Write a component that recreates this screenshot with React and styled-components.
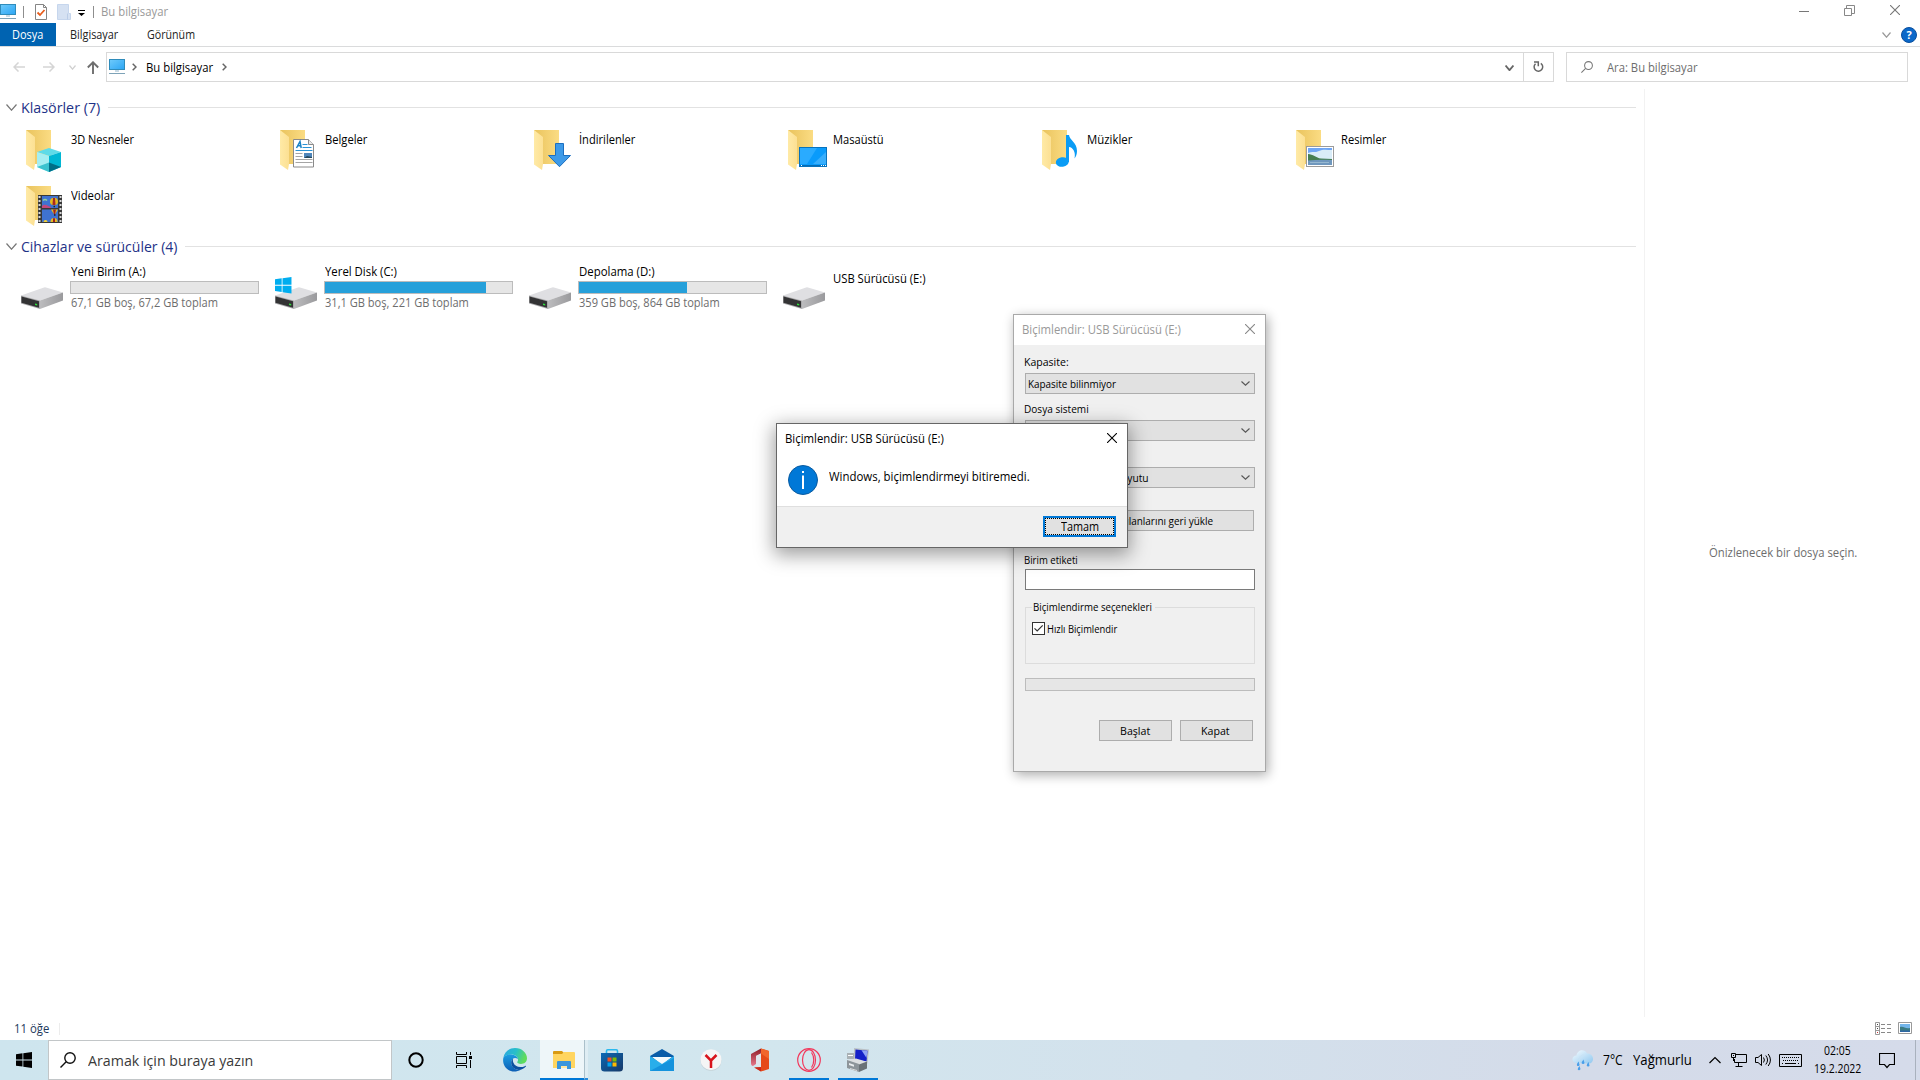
import React, { useLayoutEffect, useRef } from "react";
import styled, { createGlobalStyle, css } from "styled-components";

const Global = createGlobalStyle`
  * { box-sizing: border-box; }
  html, body { margin: 0; padding: 0; overflow: hidden; }
  body { font-family: "Open Sans", "Noto Sans", sans-serif; font-size: 12px; color: #000; }
  svg { display: block; flex: none; }
`;

/* ---------- text ---------- */
const Label = styled.span`
  display: block;
  flex: none;
  width: ${(p) => p.$w}px;
  margin-left: ${(p) => p.$ml || 0}px;
  font-size: ${(p) => p.$size || 12}px;
  line-height: ${(p) => p.$lh || 18}px;
  color: ${(p) => p.$color || "#000"};
  white-space: nowrap;
`;
const Glyphs = styled.span`
  display: inline-block;
  transform-origin: 0 50%;
`;

/* Condenses a run of text to the column width it is given. */
function Text({ w, ml, size, lh, color, children }) {
  const ref = useRef(null);
  useLayoutEffect(() => {
    const el = ref.current;
    el.style.transform = `scaleX(${w / el.offsetWidth})`;
  }, [w, children]);
  return (
    <Label $w={w} $ml={ml} $size={size} $lh={lh} $color={color}>
      <Glyphs ref={ref}>{children}</Glyphs>
    </Label>
  );
}

/* ---------- page frame ---------- */
const Desktop = styled.div`
  position: relative;
  width: 1920px;
  height: 1080px;
  background: #fff;
  display: flex;
  flex-direction: column;
`;
const Row = styled.div`
  display: flex;
  align-items: center;
`;
const TitleBar = styled(Row)`
  height: 23px;
  flex: none;
`;
const Divider = styled.i`
  width: 1px;
  height: ${(p) => p.$h || 12}px;
  margin-left: ${(p) => p.$ml}px;
  background: ${(p) => p.$color || "#8e8e8e"};
`;
const Slot = styled.div`
  margin-left: ${(p) => p.$ml || 0}px;
  padding-top: ${(p) => p.$pt || 0}px;
  flex: none;
`;
const Controls = styled.div`
  margin-left: auto;
  display: flex;
  gap: 35px;
  padding: 0 20px 3px 0;
`;
const Ribbon = styled(Row)`
  height: 24px;
  flex: none;
  border-bottom: 1px solid #dadbdc;
`;
const FileTab = styled(Row)`
  width: 56px;
  height: 23px;
  padding-top: 1px;
  background: #0063b1;
`;
const Tabs = styled(Row)`
  padding-top: 1px;
`;
const RibbonEnd = styled(Row)`
  margin-left: auto;
  gap: 10px;
  padding-right: 3px;
`;
const NavBar = styled(Row)`
  height: 40px;
  padding-right: 12px;
  flex: none;
`;
const AddressBox = styled(Row)`
  width: 1448px;
  height: 30px;
  margin-left: 7px;
  border: 1px solid #d9d9d9;
`;
const RefreshCell = styled(Row)`
  justify-content: center;
  width: 30px;
  height: 28px;
  border-left: 1px solid #d9d9d9;
`;
const SearchBox = styled(Row)`
  width: 342px;
  height: 30px;
  margin-left: 12px;
  border: 1px solid #d9d9d9;
`;
const Body = styled.div`
  display: flex;
  height: 930px;
  flex: none;
`;
const Files = styled.div`
  width: 1644px;
  padding-top: 8px;
`;
const Preview = styled.div`
  flex: 1;
  height: 928px;
  margin-top: 2px;
  border-left: 1px solid #f2f2f2;
  display: flex;
  align-items: center;
  justify-content: center;
`;
const GroupHead = styled(Row)`
  height: 24px;
  padding: 0 8px 0 6px;
`;
const Rule = styled.i`
  flex: 1;
  height: 1px;
  margin-left: 8px;
  background: #e2e2e2;
`;
const Tiles = styled.div`
  display: grid;
  grid-template-columns: repeat(6, 254px);
  grid-auto-rows: 56px;
  padding: ${(p) => p.$pt || 0}px 0 0 21px;
`;
const Tile = styled.div`
  display: flex;
  gap: 2px;
`;
const TileText = styled.div`
  padding-top: ${(p) => p.$pt}px;
`;
const Gauge = styled.div`
  width: 189px;
  height: 13px;
  margin-left: -1px;
  border: 1px solid #bcbcbc;
  background: #e6e6e6;
`;
const GaugeFill = styled.div`
  height: 11px;
  background: #26a0da;
`;
const StatusBar = styled(Row)`
  height: 23px;
  padding: 0 8px 0 14px;
  flex: none;
`;
const ViewModes = styled.div`
  margin-left: auto;
  display: flex;
  gap: 7px;
`;

/* ---------- windows ---------- */
const Window = styled.div`
  position: absolute;
  left: ${(p) => p.$x}px;
  top: ${(p) => p.$y}px;
  width: ${(p) => p.$w}px;
  height: ${(p) => p.$h}px;
  border: 1px solid ${(p) => (p.$active ? "#666" : "#a9a9a9")};
  background: #f0f0f0;
  box-shadow: ${(p) =>
    p.$active ? "0 5px 18px 2px rgba(0,0,0,.38)" : "2px 3px 11px 0 rgba(0,0,0,.33)"};
`;
const WinTitle = styled(Row)`
  height: ${(p) => p.$h}px;
  padding: 0 10px 0 8px;
  justify-content: space-between;
  background: #fff;
`;
const CloseBox = styled.div`
  padding-bottom: 2px;
`;
const Form = styled.div`
  padding: 8px 10px 0 11px;
`;
const control = css`
  display: flex;
  align-items: center;
  height: 21px;
  border: 1px solid #adadad;
  background: #e1e1e1;
`;
const Select = styled.div`
  ${control}
  margin-bottom: ${(p) => p.$mb}px;
  padding: 0 4px 0 2px;
  justify-content: space-between;
`;
const FieldLabel = styled.div`
  height: ${(p) => p.$h}px;
  margin-top: ${(p) => p.$mt || 0}px;
  margin-left: -1px;
  display: flex;
  align-items: flex-start;
`;
const Button = styled.div`
  ${control}
  width: ${(p) => p.$w}px;
  padding-right: ${(p) => p.$pr || 0}px;
  padding-left: ${(p) => p.$pl || 0}px;
  justify-content: center;
`;
const Input = styled.div`
  height: 21px;
  border: 1px solid #7a7a7a;
  background: #fff;
`;
const Fieldset = styled.fieldset`
  height: 66px;
  margin: 8px 0 0;
  padding: 3px 0 0 6px;
  border: 1px solid #dcdcdc;
  min-width: 0;
`;
const Legend = styled.legend`
  padding: 0 3px 0 1px;
  height: 18px;
`;
const CheckRow = styled(Row)`
  height: 19px;
`;
const Check = styled.div`
  width: 13px;
  height: 13px;
  margin-right: 2px;
  border: 1px solid #333;
  background: #fff;
`;
const Progress = styled.div`
  height: 13px;
  margin-top: 14px;
  border: 1px solid #bcbcbc;
  background: #e6e6e6;
`;
const Actions = styled(Row)`
  justify-content: flex-end;
  gap: 8px;
  padding-right: 2px;
  margin-top: 29px;
`;
const Message = styled.div`
  height: 53px;
  padding: 12px 0 0 11px;
  background: #fff;
  display: flex;
  gap: 11px;
`;
const MessageFoot = styled.div`
  height: 41px;
  padding: 9px 11px 0 0;
  border-top: 1px solid #dfdfdf;
  display: flex;
  justify-content: flex-end;
`;
const DefaultButton = styled.div`
  width: 73px;
  height: 21px;
  border: 2px solid #0078d7;
  background: #e1e1e1;
`;
const FocusRing = styled(Row)`
  height: 17px;
  border: 1px dotted #000;
  justify-content: center;
`;

/* ---------- taskbar ---------- */
const Taskbar = styled.div`
  display: flex;
  align-items: center;
  height: 40px;
  flex: none;
  background: linear-gradient(90deg, #cee5ee 0%, #d2e6ee 40%, #d3e1ec 62%, #d4dbe9 82%, #d5dbea 100%);
`;
const StartButton = styled(Row)`
  width: 48px;
  height: 40px;
  justify-content: center;
`;
const TaskSearch = styled(Row)`
  width: 344px;
  height: 40px;
  border: 1px solid #c2c6c8;
  background: #fff;
  padding-left: 11px;
`;
const TaskButton = styled.div`
  display: flex;
  align-items: center;
  justify-content: center;
  width: ${(p) => p.$w || 48}px;
  height: 40px;
  padding-left: ${(p) => p.$pl || 0}px;
  ${(p) => p.$active && "background: #eef6f9;"}
`;
const OpenMark = styled.div`
  display: flex;
  align-items: center;
  justify-content: center;
  width: ${(p) => p.$w}px;
  height: 40px;
  margin: 0 ${(p) => p.$m || 0}px;
  padding: 2px 0 0 ${(p) => p.$pl || 0}px;
  border-bottom: 2px solid #0078d7;
`;
const ActiveTask = styled(TaskButton)`
  padding: 2px 0 0 4px;
  background: #eef6f9;
  border-bottom: 2px solid #0078d7;
`;
const Stacked = styled.div`
  width: 4px;
  height: 40px;
  border-left: 1px solid #abc0ca;
  border-bottom: 2px solid #2a8bda;
  background: #dfedf3;
`;
const Tray = styled(Row)`
  margin-left: auto;
  height: 40px;
`;
const Clock = styled.div`
  width: 49px;
  margin-left: 11px;
  display: flex;
  flex-direction: column;
  align-items: center;
`;

/* ---------- drawings ---------- */
const PcIcon = () => (
  <svg width="16" height="16" viewBox="0 0 16 16">
    <defs>
      <linearGradient id="pc" x1="0" y1="0" x2="1" y2="1">
        <stop offset="0" stopColor="#6fcbfb" /><stop offset="1" stopColor="#2ba5f4" />
      </linearGradient>
    </defs>
    <rect x="0.5" y="0.5" width="15" height="10" fill="url(#pc)" stroke="#2f8cbb" />
    <path d="M6 11h4v2H6z" fill="#c9dbe6" />
    <path d="M0 14h16v1H0z" fill="#7ea3b8" />
  </svg>
);
const Chev = ({ w = 8, h = 5, c = "#666", s = 1.2 }) => (
  <svg width={w} height={h} viewBox={`0 0 ${w} ${h}`}>
    <path d={`M.5.5 ${w / 2} ${h - 0.8} ${w - 0.5}.5`} fill="none" stroke={c} strokeWidth={s} />
  </svg>
);
const Crumb = () => (
  <svg width="5" height="8" viewBox="0 0 5 8">
    <path d="M.7.7 4 4 .7 7.3" fill="none" stroke="#666" strokeWidth="1.5" />
  </svg>
);
const Close = ({ c = "#000" }) => (
  <svg width="10" height="10" viewBox="0 0 10 10">
    <path d="M0 0 10 10M10 0 0 10" stroke={c} strokeWidth="1.1" />
  </svg>
);
const Arrow = ({ left }) => (
  <svg width="12" height="10" viewBox="0 0 12 10">
    <path d={left ? "M12 5H1M5.5.5 1 5l4.5 4.5" : "M0 5h11M6.5.5 11 5 6.5 9.5"} fill="none" stroke="#d5d5d5" strokeWidth="1.5" />
  </svg>
);
const Lens = ({ n = 12, c = "#777" }) => (
  <svg width={n} height={n} viewBox="0 0 16 16">
    <circle cx="10" cy="6" r="5.2" fill="none" stroke={c} strokeWidth="1.4" />
    <path d="M6.2 9.8.5 15.5" stroke={c} strokeWidth="1.4" />
  </svg>
);
const WinLogo = ({ w, h, c }) => (
  <svg width={w} height={h} viewBox="0 0 16 16" preserveAspectRatio="none">
    <path fill={c} d="M0 2.3 6.5 1.3v6.2H0zM7.3 1.2 16 0v7.5H7.3zM0 8.4h6.5v6.2L0 13.7zM7.3 8.4H16V16l-8.7-1.2z" />
  </svg>
);

const overlays = {
  cube: (
    <g>
      <path d="M16 26l12-4 12 4-12 4z" fill="#5fdbe8" />
      <path d="M16 26l12 4v16l-12-5z" fill="#a5eef2" />
      <path d="M28 30l12-4v15l-12 5z" fill="#00b7d4" />
      <path d="M16 41l12-4.500v9.500z" fill="#3bc3cf" />
      <path d="M40 41l-12-4.500v9.500z" fill="#006f88" />
    </g>
  ),
  doc: (
    <g>
      <path d="M18.500 13.500h15l5 5v22.500h-20z" fill="#fff" stroke="#8a8a8a" />
      <path d="M33.500 13.500v5h5" fill="#e8e8e8" stroke="#8a8a8a" />
      <path d="M21.500 22 25 15.500l1.200 6.500M22.700 19.700h3" fill="none" stroke="#1a82c4" strokeWidth="1.500" />
      <path d="M27.500 18.500h5M27.500 21.500h9M20.500 24.500h17" stroke="#2a93d5" />
      <path d="M20.500 27.500h7M20.500 30.500h7M20.500 33.500h17M20.500 36.500h17" stroke="#a5a5a5" />
      <rect x="29" y="27" width="8" height="5" fill="#4f86bb" />
      <path d="M29 32l3-2 5 1v1z" fill="#24475c" />
    </g>
  ),
  down: <path d="M26.500 17.500h8v12h7L30.500 40.700 19.500 29.500h7z" fill="#3d9ae8" stroke="#1c6fc0" />,
  desktop: (
    <g>
      <rect x="16.500" y="21.500" width="27" height="19" fill="#0a9bfb" stroke="#0873bd" />
      <path d="M17 22h17L24 38h-7z" fill="#2aabff" />
      <path d="M43 26v12H30z" fill="#38aefc" />
      <path d="M17 39.500h26" stroke="#066cb3" />
      <path d="M18 39.500h1M38 39.500h1M40 39.500h1M42 39.500h1" stroke="#fff" />
    </g>
  ),
  note: (
    <g fill="#0a9cf5">
      <ellipse cx="25.300" cy="36" rx="6.500" ry="4.800" transform="rotate(-8 25.300 36)" />
      <path d="M29 9h3c.5 5 8 7.500 8 16 0 3-1 5.500-2.500 7.500C39 26 36 21.500 32 21v15h-3z" />
    </g>
  ),
  picture: (
    <g>
      <rect x="15.500" y="20.500" width="27" height="20" fill="#fff" stroke="#9b9b9b" />
      <rect x="17" y="22" width="24" height="17" fill="#6fa6f5" />
      <path d="M17 27c4-2 7 0 11-2s8-1 13-1v9H17z" fill="#d9ecf8" />
      <path d="M17 28c5 0 8 4 13 4.500l11 .5v2H17z" fill="#457e51" />
      <path d="M17 34.500c8-1 16-1 24-.5v5H17z" fill="#6f97bd" />
      <path d="M19 36.500h19" stroke="#a9c5d8" strokeWidth=".7" />
    </g>
  ),
  film: (
    <g>
      <rect x="17" y="13" width="24" height="28" fill="#383838" />
      <path d="M18.500 14v27M39.500 14v27" stroke="#d7d7d7" strokeWidth="2" strokeDasharray="2 2" />
      <path d="M21 14h16v12H21zM21 27.500h16V40H21z" fill="#3f72d0" />
      <path d="M21 24c3-3 6 0 9 1v1h-9z" fill="#c0487c" />
      <path d="M22 18.500q2-2 4 0" stroke="#8fd0a0" fill="none" strokeWidth="1.500" />
      <ellipse cx="33" cy="19.500" rx="4" ry="3.800" fill="#e5ba20" />
      <path d="M32 16h2l.5 7h-3z" fill="#a92822" />
      <path d="M30 27.500h7l-2.500 4h-2z" fill="#e4bb26" />
      <path d="M32 27.500h3l-1 5h-1z" fill="#a3221f" />
      <path d="M29.500 40q0-4 3.500-4t3.500 4z" fill="#e4bb26" />
      <path d="M32 36.200h2V40h-2z" fill="#a3221f" />
      <path d="M22.500 40q0-2 2-2t2 2z" fill="#f0cf38" />
      <path d="M32.500 24.500h1.500M33 33h1.500" stroke="#222" strokeWidth="1.500" />
    </g>
  ),
};
const FolderIcon = ({ kind }) => (
  <svg width="48" height="56" viewBox="0 0 48 56">
    <defs>
      <linearGradient id="fb"><stop offset="0" stopColor="#e9c35d" /><stop offset="1" stopColor="#fbdc83" /></linearGradient>
      <linearGradient id="ff"><stop offset="0" stopColor="#ffeaa6" /><stop offset="1" stopColor="#fce093" /></linearGradient>
    </defs>
    <g transform="translate(0 4)">
      <path d="M5 4h25v34H13z" fill="url(#fb)" />
      <path d="M5 4l9 7v27l-1 6-8-5.500z" fill="url(#ff)" />
      {overlays[kind]}
    </g>
  </svg>
);
const DriveIcon = ({ system }) => (
  <svg width="48" height="56" viewBox="0 0 48 56">
    <defs>
      <linearGradient id="ds"><stop offset="0" stopColor="#bcbcbe" /><stop offset="1" stopColor="#9a9a9d" /></linearGradient>
    </defs>
    <path d="M0 36.500 23 28.500q1-.4 2 0L42 33.500 19 41.500z" fill="#dfdfe2" />
    <path d="M19 41.500 42 33.500v8L19 50z" fill="url(#ds)" />
    <path d="M0 36.500l19 5V50L0 44.500z" fill="#a9a9ab" />
    <path d="M.5 37.500l17.500 4.700v6.600L.5 43.800z" fill="#333334" />
    <path d="M14 44.500l2.200.6v1.500l-2.200-.6z" fill="#2fe03c" />
    {system && (
      <path transform="translate(0 18) scale(1.03)" fill="#00adef" d="M0 2.300 6.500 1.300v6.200H0zM7.300 1.200 16 0v7.500H7.300zM0 8.400h6.500v6.200L0 13.700zM7.300 8.400H16V16l-8.700-1.200z" />
    )}
  </svg>
);

const Edge = () => (
  <svg width="24" height="24" viewBox="0 0 24 24">
    <defs>
      <linearGradient id="e1" x1="0" y1="0" x2="1" y2=".3"><stop offset="0" stopColor="#2aa6e4" /><stop offset=".55" stopColor="#28bfc9" /><stop offset="1" stopColor="#5fdc5c" /></linearGradient>
      <linearGradient id="e2" x1="0" y1="0" x2="0" y2="1"><stop offset="0" stopColor="#1b9de2" /><stop offset="1" stopColor="#0d5eb5" /></linearGradient>
    </defs>
    <path d="M.3 10C1.300 4 6 0 12 0c7 0 12 5 12 10.300 0 3.700-2.800 5.700-6 5.700-2.700 0-4-1-3.800-1.800.2-.6.800-1 .8-2.500C15 9 12 6.500 8.500 6.500 4.500 6.500 1.500 8.500.3 10z" fill="url(#e1)" />
    <path d="M.3 10c1.500-2.500 5-3.800 8.200-3.500 3.300.3 6 2 6.300 4.500-3.300-2.500-7 0-6.600 4 .4 4.500 5 8 9.800 6.500C9 27-1.500 20.500.3 10z" fill="url(#e2)" />
    <path d="M10.200 10.400c-3.200 2-2.500 8 1.500 10.400 3.600 2 7.800 1.400 11.200-2.300.4-.5 0-1-.6-.6-5.500 2.600-10.500.6-12-3.400-.5-1.500-.6-2.700-.1-4.100z" fill="#0c4fa0" />
  </svg>
);
const Explorer = () => (
  <svg width="22" height="18" viewBox="0 0 22 18">
    <path d="M0 1q0-1 1-1h8l2 2h-1v3H0z" fill="#d99a12" />
    <path d="M0 3h9l2-2h10q1 0 1 1v15H0z" fill="#ffd560" />
    <path d="M4 18v-7q0-1 1-1h12q1 0 1 1v7h-4v-3H8v3z" fill="#3a96dd" />
    <path d="M8 15h6v2H8z" fill="#ffe8a4" />
  </svg>
);
const Store = () => (
  <svg width="24" height="24" viewBox="0 0 24 24">
    <defs><linearGradient id="st" x1="0" y1="0" x2="1" y2="1"><stop offset="0" stopColor="#0c69b5" /><stop offset="1" stopColor="#173867" /></linearGradient></defs>
    <path d="M6.500 6V3q0-1.200 1.200-1.200h8.600q1.200 0 1.200 1.200v3" fill="none" stroke="#29b8ee" strokeWidth="1.600" />
    <path d="M1 5h22v15q0 3.500-3.500 3.500h-15Q1 23.500 1 20z" fill="url(#st)" />
    <path d="M7.500 9.500h4v4h-4z" fill="#f25022" /><path d="M12.500 9.500h4v4h-4z" fill="#7fba00" />
    <path d="M7.500 14.500h4v4h-4z" fill="#00a4ef" /><path d="M12.500 14.500h4v4h-4z" fill="#ffb900" />
  </svg>
);
const Mail = () => (
  <svg width="24" height="24" viewBox="0 0 24 24">
    <path d="M0 8 12 1l12 7v5H0z" fill="#0a5ca8" />
    <path d="M2 9h20l-10 8z" fill="#f5fafc" />
    <path d="M0 8l12 8 12-8v15H0z" fill="#29aeea" />
    <path d="M0 23 24 10v13z" fill="#0f89d8" opacity=".75" />
  </svg>
);
const Yandex = () => (
  <svg width="22" height="22" viewBox="0 0 22 22">
    <circle cx="11" cy="11.500" r="10.500" fill="#c4d2d8" /><circle cx="11" cy="10.700" r="10.500" fill="#f5f5f5" />
    <path d="M5.500 6 11 11.500v7.500M16.500 6 11 11.500" fill="none" stroke="#d8131b" strokeWidth="2.500" />
  </svg>
);
const Office = () => (
  <svg width="18" height="24" viewBox="0 0 18 24">
    <defs><linearGradient id="of" x1="0" y1="0" x2="0" y2="1"><stop offset="0" stopColor="#8e1b25" /><stop offset="1" stopColor="#e6798c" /></linearGradient></defs>
    <path d="M0 6 10 .5v5L5 8v8l-3 2q-2 0-2-3z" fill="url(#of)" />
    <path d="M10 .5 18 3v18l-8 2.500-6-4h6z" fill="#e64a19" />
    <path d="M10 .5 18 3v8l-8-5.500z" fill="#f1662c" />
    <path d="M3 19.500 10 19v4.500z" fill="#c92a1d" />
    <path d="M5 8l5-2.500V19l-5-1z" fill="#dfe6ec" />
  </svg>
);
const Opera = () => (
  <svg width="24" height="24" viewBox="0 0 24 24">
    <g fill="none" stroke="#f2385c" strokeWidth="1.200">
      <circle cx="12" cy="12" r="11.300" />
      <ellipse cx="12" cy="12" rx="6.500" ry="10.300" />
      <path d="M14.500 4.500c3 4 3 11 0 15" />
    </g>
  </svg>
);
const Device = () => (
  <svg width="24" height="24" viewBox="0 0 24 24">
    <path d="M8 0l15 1.500-1.500 14L8 13z" fill="#b9c0c5" />
    <path d="M9.500 1.500 21.500 2.800 20.500 13.500 9 11.800z" fill="#1420c8" />
    <path d="M15.500 2.200 21.500 2.800 20.500 10z" fill="#8fa3f5" />
    <path d="M1 5h7v6H1z" fill="#a9b1b5" /><path d="M2 7.500h5" stroke="#fff" />
    <path d="M1 12l9-1.500 12 3.500-9 3z" fill="#dcdfe1" />
    <path d="M1 12l12 4v8L1 20z" fill="#8d959a" /><path d="M13 16.500l8-3v7l-8 3.500z" fill="#6a7277" />
    <path d="M3 15l5 1.700v2L3 17z" fill="#e9ecee" /><path d="M4 20.500l7 2" stroke="#dadada" />
  </svg>
);
const Weather = () => (
  <svg width="22" height="22" viewBox="0 0 22 22">
    <defs><linearGradient id="wc" x1="0" y1="0" x2="1" y2="1"><stop offset="0" stopColor="#f4fbff" /><stop offset="1" stopColor="#91c8ef" /></linearGradient></defs>
    <path d="M4 14C-1 13-.5 6.500 4.500 6.500 5 1 12.500-1 15 4.500c6-.5 8.500 7.500 3 10z" fill="url(#wc)" />
    <path d="M12 6c-4 0-5 3-4.500 5" stroke="#c8e2f5" fill="none" />
    <g fill="#4a9fea">
      <path d="M6.500 12.500q-2 2.700-1.600 3.700a1.400 1.400 0 0 0 2.700-.4z" />
      <path d="M11.500 10.500q-2.200 2.700-1.800 3.800a1.500 1.500 0 0 0 2.800-.4z" />
      <path d="M16.500 13q-2.200 2.700-1.800 3.800a1.500 1.500 0 0 0 2.800-.4z" />
      <path d="M7.500 17q-2.200 2.500-1.800 3.500a1.500 1.500 0 0 0 2.800-.4z" />
    </g>
  </svg>
);

const folders = [
  ["3D Nesneler", "cube", 63], ["Belgeler", "doc", 42], ["İndirilenler", "down", 56.5],
  ["Masaüstü", "desktop", 51], ["Müzikler", "note", 45.5], ["Resimler", "picture", 45.5], ["Videolar", "film", 43.5],
];
const drives = [
  { name: "Yeni Birim (A:)", w: 75, sub: "67,1 GB boş, 67,2 GB toplam", sw: 147, used: 0 },
  { name: "Yerel Disk (C:)", w: 72, sub: "31,1 GB boş, 221 GB toplam", sw: 144, used: 161, system: true },
  { name: "Depolama (D:)", w: 76, sub: "359 GB boş, 864 GB toplam", sw: 141, used: 108 },
  { name: "USB Sürücüsü (E:)", w: 93 },
];

function Explore() {
  return (
    <>
      <TitleBar>
        <PcIcon />
        <Divider $ml={7} />
        <Slot $ml={11}>
          <svg width="12" height="16" viewBox="0 0 12 16">
            <path d="M.5.5h8l3 3v12H.5z" fill="#fff" stroke="#858585" /><path d="M8.500.5v3h3" fill="none" stroke="#858585" />
            <path d="M2.500 8.500 5 11l4.500-5" fill="none" stroke="#e85d1c" strokeWidth="1.800" />
          </svg>
        </Slot>
        <Slot $ml={10}>
          <svg width="14" height="16" viewBox="0 0 14 16">
            <path d="M.5.5h11v9h2v6H.5z" fill="#d5e1f2" stroke="#c6d6ed" /><path d="M10.500 9.500v6" stroke="#bacce6" />
          </svg>
        </Slot>
        <Slot $ml={7} $pt={3}>
          <svg width="7" height="6" viewBox="0 0 7 6"><path d="M0 0h7v1H0zM0 3h7L3.500 6z" /></svg>
        </Slot>
        <Divider $ml={8} />
        <Text w={67} ml={7} color="#999">Bu bilgisayar</Text>
        <Controls>
          <svg width="10" height="11"><path d="M0 6.500h10" stroke="#777" /></svg>
          <svg width="11" height="11"><path d="M.5 3.500h7v7h-7zM2.500 3V.5h8v8H8" fill="none" stroke="#888" /></svg>
          <Close c="#777" />
        </Controls>
      </TitleBar>
      <Ribbon>
        <FileTab><Text w={31} ml={12} color="#fff">Dosya</Text></FileTab>
        <Tabs>
          <Text w={48} ml={14} color="#222">Bilgisayar</Text>
          <Text w={48} ml={29} color="#222">Görünüm</Text>
        </Tabs>
        <RibbonEnd>
          <Chev w={9} h={6} c="#999" />
          <svg width="16" height="16" viewBox="0 0 16 16">
            <circle cx="8" cy="8" r="7.500" fill="#0b68c9" stroke="#0a4f9e" />
            <text x="8" y="12" textAnchor="middle" fontSize="11" fontWeight="700" fill="#fff">?</text>
          </svg>
        </RibbonEnd>
      </Ribbon>
      <NavBar>
        <Slot $ml={13}><Arrow left /></Slot>
        <Slot $ml={18}><Arrow /></Slot>
        <Slot $ml={14}><Chev w={7} h={5} c="#d0d0d0" /></Slot>
        <Slot $ml={11} $pt={1}>
          <svg width="12" height="13" viewBox="0 0 12 13"><path d="M6 13V1.500M.8 6.500 6 1.300l5.200 5.200" fill="none" stroke="#6e6e6e" strokeWidth="1.900" /></svg>
        </Slot>
        <AddressBox>
          <Slot $ml={2}><PcIcon /></Slot>
          <Slot $ml={7}><Crumb /></Slot>
          <Text w={67} ml={9} lh={19}>Bu bilgisayar</Text>
          <Slot $ml={9}><Crumb /></Slot>
          <Slot $ml={1278} $pt={2}><Chev w={9} h={6} c="#666" s={1.800} /></Slot>
          <Slot $ml={9}>
            <RefreshCell>
              <svg width="11" height="12" viewBox="0 0 11 12"><path d="M2.500 2.700A4.300 4.300 0 1 0 7.800 2.300" fill="none" stroke="#666" strokeWidth="1.500" /><path d="M1 1h4.300v4.300" fill="none" stroke="#666" strokeWidth="1.500" /></svg>
            </RefreshCell>
          </Slot>
        </AddressBox>
        <SearchBox>
          <Slot $ml={14}><Lens n={12} /></Slot>
          <Text w={91} ml={14} lh={19} color="#6d6d6d">Ara: Bu bilgisayar</Text>
        </SearchBox>
      </NavBar>
      <Body>
        <Files>
          <GroupHead>
            <Chev w={11} h={7} c="#777" />
            <Text w={79} ml={4} size={15} color="#1e3287">Klasörler (7)</Text>
            <Rule />
          </GroupHead>
          <Tiles $pt={3}>
            {folders.map(([name, kind, w]) => (
              <Tile key={name}>
                <FolderIcon kind={kind} />
                <TileText $pt={9}><Text w={w}>{name}</Text></TileText>
              </Tile>
            ))}
          </Tiles>
          <GroupHead>
            <Chev w={11} h={7} c="#777" />
            <Text w={156} ml={4} size={15} color="#1e3287">Cihazlar ve sürücüler (4)</Text>
            <Rule />
          </GroupHead>
          <Tiles $pt={1}>
            {drives.map((d) => (
              <Tile key={d.name}>
                <DriveIcon system={d.system} />
                <TileText $pt={d.sub ? 4 : 11}>
                  <Text w={d.w}>{d.name}</Text>
                  {d.sub && <Gauge><GaugeFill style={{ width: d.used }} /></Gauge>}
                  {d.sub && <Text w={d.sw} color="#6d6d6d">{d.sub}</Text>}
                </TileText>
              </Tile>
            ))}
          </Tiles>
        </Files>
        <Preview><Text w={148} color="#6d6d6d">Önizlenecek bir dosya seçin.</Text></Preview>
      </Body>
      <StatusBar>
        <Text w={35} color="#1e395b">11 öğe</Text>
        <Divider $ml={10} $color="#ececec" />
        <ViewModes>
          <svg width="16" height="13" viewBox="0 0 16 13">
            <path d="M.5.5h4v12h-4zM0 4.500h5M0 8.500h5" fill="none" stroke="#999" />
            <path d="M2 2.500h1M2 6.500h1" stroke="#444" /><path d="M2 10.500h1" stroke="#c33" />
            <path d="M6 2.500h4M12 2.500h4M6 6.500h4M12 6.500h4M6 10.500h4M12 10.500h4" stroke="#888" />
          </svg>
          <svg width="14" height="12" viewBox="0 0 14 12">
            <path d="M.5.500h13v11H.5z" fill="#fff" stroke="#999" /><path d="M2 2h10v8H2z" fill="#73b5ea" /><path d="M2 5c4-1 5 2 10 1v4H2z" fill="#3b7b83" /><path d="M2 8.500h10V10H2z" fill="#2e67a3" />
          </svg>
        </ViewModes>
      </StatusBar>
    </>
  );
}

function FormatWindow() {
  return (
    <Window $x={1013} $y={314} $w={253} $h={458}>
      <WinTitle $h={30}>
        <Text w={159} color="#999">Biçimlendir: USB Sürücüsü (E:)</Text>
        <CloseBox><Close c="#888" /></CloseBox>
      </WinTitle>
      <Form>
        <FieldLabel $h={20}><Text w={45} size={11}>Kapasite:</Text></FieldLabel>
        <Select $mb={6}><Text w={88} size={11}>Kapasite bilinmiyor</Text><Chev w={9} h={5} c="#555" s={1.100} /></Select>
        <FieldLabel $h={20}><Text w={65} size={11}>Dosya sistemi</Text></FieldLabel>
        <Select $mb={26}><i /><Chev w={9} h={5} c="#555" s={1.100} /></Select>
        <Select $mb={22}><Text w={121} size={11}>Varsayılan ayırma boyutu</Text><Chev w={9} h={5} c="#555" s={1.100} /></Select>
        <Button $w={229} $pl={5}><Text w={142} size={11}>Aygıt varsayılanlarını geri yükle</Text></Button>
        <FieldLabel $mt={20} $h={18}><Text w={54} size={11}>Birim etiketi</Text></FieldLabel>
        <Input />
        <Fieldset>
          <Legend><Text w={119} size={11}>Biçimlendirme seçenekleri</Text></Legend>
          <CheckRow>
            <Check>
              <svg width="11" height="11" viewBox="0 0 11 11"><path d="M1.500 5.300 4.200 8 9.700 2.300" fill="none" stroke="#333" strokeWidth="1.200" /></svg>
            </Check>
            <Text w={70} size={11}>Hızlı Biçimlendir</Text>
          </CheckRow>
        </Fieldset>
        <Progress />
        <Actions>
          <Button $w={73} $pr={2}><Text w={30} size={11}>Başlat</Text></Button>
          <Button $w={73} $pr={2}><Text w={29} size={11}>Kapat</Text></Button>
        </Actions>
      </Form>
    </Window>
  );
}

function MessageWindow() {
  return (
    <Window $active $x={776} $y={423} $w={352} $h={125}>
      <WinTitle $h={29}>
        <Text w={159}>Biçimlendir: USB Sürücüsü (E:)</Text>
        <CloseBox><Close /></CloseBox>
      </WinTitle>
      <Message>
        <svg width="30" height="30" viewBox="0 0 30 30">
          <circle cx="15" cy="15" r="14.500" fill="#0078d7" stroke="#0a5ba0" />
          <path d="M14 10.500h2V24h-2zM14 6h2v2h-2z" fill="#fff" />
        </svg>
        <Text w={201} lh={24}>Windows, biçimlendirmeyi bitiremedi.</Text>
      </Message>
      <MessageFoot>
        <DefaultButton><FocusRing><Text w={38} lh={15}>Tamam</Text></FocusRing></DefaultButton>
      </MessageFoot>
    </Window>
  );
}

export default function App() {
  return (
    <Desktop>
      <Global />
      <Explore />
      <Taskbar>
        <StartButton><WinLogo w={16} h={16} c="#000" /></StartButton>
        <TaskSearch>
          <Lens n={16} c="#111" />
          <Text w={165} ml={12} size={15} lh={22} color="#3a3a3a">Aramak için buraya yazın</Text>
        </TaskSearch>
        <TaskButton>
          <svg width="16" height="16"><circle cx="8" cy="8" r="6.700" fill="none" stroke="#000" strokeWidth="2" /></svg>
        </TaskButton>
        <TaskButton>
          <svg width="16" height="16" viewBox="0 0 16 16">
            <path d="M.5 0v2.500h10V0M.5 16v-2.500h10V16M.5 4.500h10v7H.5zM14.500 0v3M14.500 8v8" fill="none" stroke="#000" /><path d="M13 4h3v3h-3z" />
          </svg>
        </TaskButton>
        <TaskButton $w={52} $pl={2}><Edge /></TaskButton>
        <ActiveTask $w={44}><Explorer /></ActiveTask>
        <Stacked />
        <TaskButton><Store /></TaskButton>
        <TaskButton $w={52}><Mail /></TaskButton>
        <TaskButton $w={46}><Yandex /></TaskButton>
        <TaskButton $w={52}><Office /></TaskButton>
        <OpenMark $w={40} $m={3}><Opera /></OpenMark>
        <OpenMark $w={40} $m={6}><Device /></OpenMark>
        <Tray>
          <Weather />
          <Text w={20} ml={9} size={14.500} lh={22}>7°C</Text>
          <Text w={59} ml={10} size={14.500} lh={22}>Yağmurlu</Text>
          <Slot $ml={17}>
            <svg width="12" height="8"><path d="M.5 7 6 1.500 11.500 7" fill="none" stroke="#000" strokeWidth="1.200" /></svg>
          </Slot>
          <Slot $ml={10}>
            <svg width="16" height="14" viewBox="0 0 16 14"><path d="M5 1.500h10.500v8h-12V6M7.500 10v3M4.500 13.500h7M.5.500h4v4h-4zM2.500 5v3" fill="none" stroke="#000" /><path d="M2 2h1v1H2z" /></svg>
          </Slot>
          <Slot $ml={8}>
            <svg width="17" height="14" viewBox="0 0 17 14"><path d="M.5 4.500h2.500l3.500-3v11L3 9.500H.5zM8.500 4.500q1.800 2.500 0 5M10.800 2.500q3.500 4.500 0 9M13.200 1q4.500 6 0 12" fill="none" stroke="#000" /></svg>
          </Slot>
          <Slot $ml={7}>
            <svg width="23" height="13" viewBox="0 0 23 13"><path d="M.5.500h22v12H.5z" fill="none" stroke="#000" /><path d="M3 3.500h17M4 6.500h15" stroke="#000" strokeDasharray="1 1" /><path d="M3 9.500h1M6 9.500h11M19 9.500h1" stroke="#000" /></svg>
          </Slot>
          <Clock>
            <Text w={27}>02:05</Text>
            <Text w={47}>19.2.2022</Text>
          </Clock>
          <Slot $ml={17}>
            <svg width="16" height="17" viewBox="0 0 16 17"><path d="M.5 1.500h15v11h-5L8 15.500l-2.500-3h-5z" fill="none" stroke="#000" strokeWidth="1.200" /></svg>
          </Slot>
          <Slot $ml={20}><Divider as="div" $ml={0} $h={40} $color="#a9b1bd" /></Slot>
          <Slot $ml={4} />
        </Tray>
      </Taskbar>
      <FormatWindow />
      <MessageWindow />
    </Desktop>
  );
}
